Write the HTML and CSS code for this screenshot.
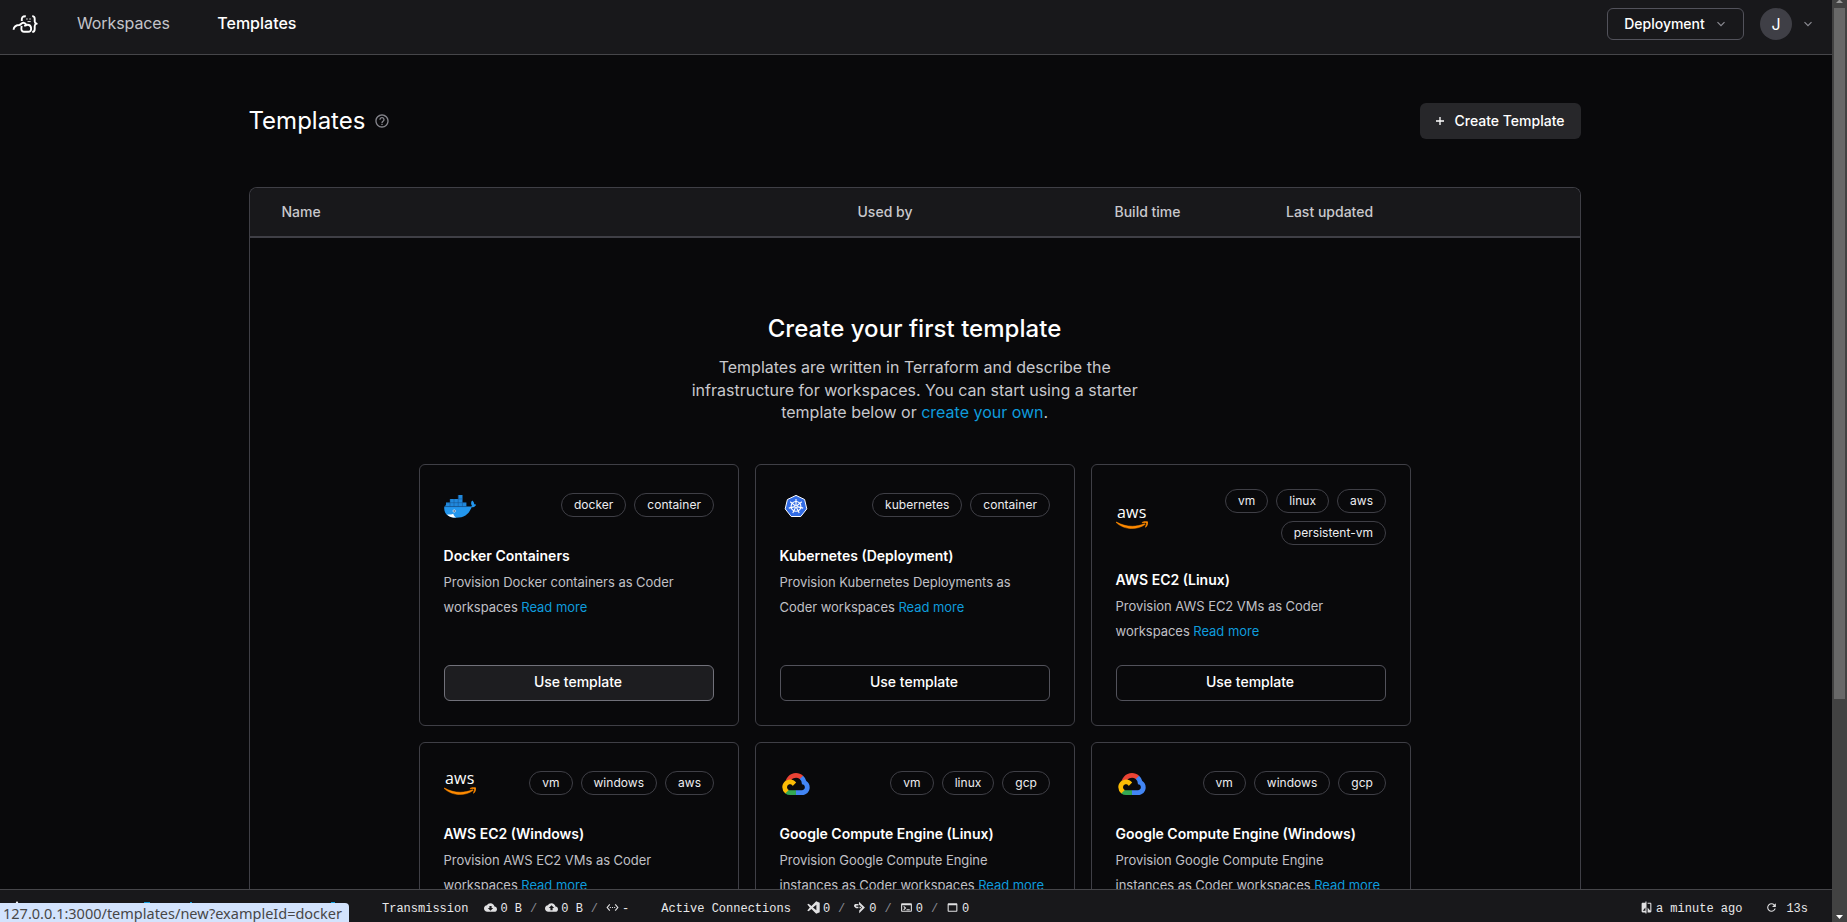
FILE: index.html
```html
<!DOCTYPE html>
<html lang="en">
<head>
<meta charset="utf-8">
<title>Templates</title>
<link rel="stylesheet" href="styles.css">
</head>
<body>
<svg class="defs" width="0" height="0" aria-hidden="true">
  <symbol id="smile" viewBox="0 0 256 60">
    <g transform="translate(0 -94)" fill="#ff8a00" stroke="#ff8a00" stroke-width="4">
      <path d="M230.993 120.964c-27.888 20.599-68.408 31.534-103.247 31.534-48.827 0-92.821-18.056-126.050-48.064-2.628-2.373-.255-5.594 2.881-3.730 35.942 20.854 80.276 33.483 126.136 33.483 30.940 0 64.932-6.442 96.212-19.666 4.662-2.120 8.646 3.052 4.068 6.443z"/>
      <path d="M242.614 107.742c-3.560-4.577-23.566-2.204-32.636-1.102-2.713.34-3.137-2.034-.678-3.814 15.936-11.190 42.130-7.968 45.181-4.239 3.052 3.815-.848 30.008-15.767 42.554-2.288 1.950-4.492.933-3.475-1.610 3.390-8.393 10.935-27.296 7.375-31.789z"/>
    </g>
  </symbol>
  <symbol id="gcp" viewBox="0 0 32 32">
    <g transform="translate(2.300 5) scale(.107)">
      <path fill="#EA4335" d="M170.252 56.819l22.253-22.253 1.483-9.370C153.437-11.677 88.976-7.496 52.420 33.920 42.267 45.423 34.734 59.764 30.717 74.573l7.970-1.123 44.505-7.340 3.436-3.513c19.797-21.742 53.270-24.667 76.128-6.168l7.496.39z"/>
      <path fill="#4285F4" d="M224.205 73.918a100.249 100.249 0 0 0-30.217-48.722l-31.232 31.232a55.515 55.515 0 0 1 20.379 44.037v5.544c15.350 0 27.797 12.445 27.797 27.796 0 15.352-12.446 27.485-27.797 27.485h-55.671l-5.466 5.934v33.340l5.466 5.231h55.670c39.930.311 72.553-31.494 72.864-71.424a72.303 72.303 0 0 0-31.793-60.453"/>
      <path fill="#34A853" d="M71.870 205.796h55.593V161.290H71.870a27.275 27.275 0 0 1-11.400-2.498l-7.887 2.420-22.409 22.253-1.952 7.574a72.260 72.260 0 0 0 43.648 14.757"/>
      <path fill="#FBBC05" d="M71.870 61.425C31.940 61.663-.237 94.228.001 134.159a72.302 72.302 0 0 0 28.222 56.880l32.248-32.247c-13.990-6.322-20.208-22.786-13.887-36.776 6.320-13.990 22.786-20.208 36.775-13.888a27.796 27.796 0 0 1 13.887 13.888l32.248-32.248A72.224 72.224 0 0 0 71.870 61.425"/>
    </g>
  </symbol>
</svg>

<header class="navbar">
  <svg class="logo" viewBox="0 0 26 20" fill="none" stroke="#fff" stroke-width="1.900" stroke-linejoin="round">
    <path d="M1.600 15.800C1.700 12.300 4.500 11.200 7.200 11c1.600-.2 2-2 4-2.300 1.500-.1 2.400.8 3.600 2.300l-2.600.9"/>
    <path d="M9.600 11.800c-.6 4.200 0 6 2.300 6h4.200c2.200 0 3.200-1.300 3-3.600-.2-2.300-1.600-3.600-4-3.500"/>
    <path d="M9.800 7C9.500 3.500 10.200 2.100 13.800 2.200M20.200 2.100c2 0 2.500.8 2.500 2.700v2.700c0 1.100.6 1.800 2 2.200-1.400.4-2 1.100-2 2.200v3.300c0 1.900-.5 2.700-2.500 2.700"/>
    <path d="M14.200 5h1.500M17.300 5h1.500M15.500 7.600h3.200" stroke-width=".9"/>
  </svg>
  <nav class="nav-links">
    <a>Workspaces</a>
    <a class="active">Templates</a>
  </nav>
  <button class="deployment">Deployment
    <svg viewBox="0 0 10 8"><path d="M1.500 2.200 5 5.700l3.500-3.500"/></svg>
  </button>
  <div class="avatar">J</div>
  <svg class="chevron" viewBox="0 0 10 8"><path d="M1.500 2.200 5 5.700l3.500-3.500"/></svg>
</header>

<main class="page">
  <div class="page-head">
    <h1>Templates</h1>
    <svg class="help" viewBox="0 0 24 24"><path d="M11 18h2v-2h-2v2zm1-16C6.480 2 2 6.480 2 12s4.480 10 10 10 10-4.480 10-10S17.520 2 12 2zm0 18c-4.410 0-8-3.590-8-8s3.590-8 8-8 8 3.590 8 8-3.590 8-8 8zm0-14c-2.210 0-4 1.790-4 4h2c0-1.100.9-2 2-2s2 .9 2 2c0 2-3 1.750-3 5h2c0-2.250 3-2.500 3-5 0-2.210-1.790-4-4-4z"/></svg>
    <button class="create"><svg viewBox="0 0 10 10"><path d="M5 1v8M1 5h8"/></svg>Create Template</button>
  </div>

  <section class="table">
    <div class="thead">
      <span>Name</span><span>Used by</span><span>Build time</span><span>Last updated</span>
    </div>
    <div class="empty">
      <h2>Create your first template</h2>
      <p class="intro">Templates are written in Terraform and describe the<br>infrastructure for workspaces. You can start using a starter<br>template below or <a>create your own</a>.</p>
      <div class="cards">
        <article class="card">
          <div class="card-top">
            <svg class="icon" viewBox="0 0 32 32">
              <path fill="#2396ed" d="M.3 16.400h25.200c1.300 0 2-.3 2.500-.7-1.300-1.700-1.200-3.700.1-5.300 1.500 1 2.100 2.200 2.100 3.600.6 0 1.200 0 1.900.5-.8 1.800-2.400 2.600-4.500 2.500C24.900 24.400 19.800 27.500 12.500 27.500 5 27.500-.6 24 .3 16.400z" transform="translate(0 .2)"/>
              <path fill="#2088dc" d="M2 12.500h4V8.900h8.300V5h4.200v7.500h3.900v4.100H.9l1.100-2z"/>
              <path stroke="#17508c" stroke-width=".5" fill="none" d="M2 12.700h20M6 9v7.700M10 9v7.700M14.200 5v11.700M18.400 12v4.700M14.200 8.900h4.300M.7 16.600h22"/>
              <circle cx="10.200" cy="21" r="1.200" fill="#173f73" stroke="#fff" stroke-width=".7"/>
              <path fill="#fff" d="M3 24.400c2 .3 4.500.1 6.300-.7.3 1.600 1 2.700 2.900 3.900C8.500 27.700 5.300 26.700 3 24.400z"/>
            </svg>
            <div class="tags"><span>docker</span><span>container</span></div>
          </div>
          <h3>Docker Containers</h3>
          <p>Provision Docker containers as Coder<br>workspaces <a>Read more</a></p>
          <button class="use hover">Use template</button>
        </article>
        <article class="card">
          <div class="card-top">
            <svg class="icon" viewBox="0 0 32 32">
              <path fill="#326ce5" stroke="#fff" stroke-width="1" stroke-linejoin="round" d="M16 5.400 24.600 9.500 26.800 18.900 20.800 26.500H11.200L5.200 18.900 7.400 9.500z"/>
              <g stroke="#fff" stroke-width="1.100" fill="none">
                <circle cx="16" cy="16.400" r="4.900"/>
                <path d="M16 16.400V9M16 16.400l5.800-4.600M16 16.400l7.200 1.700M16 16.400l3.200 6.700M16 16.400l-3.200 6.700M16 16.400l-7.200 1.700M16 16.400l-5.800-4.600"/>
              </g>
              <circle cx="16" cy="16.400" r="1.100" fill="#326ce5" stroke="#fff" stroke-width=".8"/>
            </svg>
            <div class="tags"><span>kubernetes</span><span>container</span></div>
          </div>
          <h3>Kubernetes (Deployment)</h3>
          <p>Provision Kubernetes Deployments as<br>Coder workspaces <a>Read more</a></p>
          <button class="use">Use template</button>
        </article>
        <article class="card">
          <div class="card-top">
            <div class="icon aws"><b>aws</b><svg><use href="#smile"/></svg></div>
            <div class="tags wrap"><span>vm</span><span>linux</span><span>aws</span><span>persistent-vm</span></div>
          </div>
          <h3>AWS EC2 (Linux)</h3>
          <p>Provision AWS EC2 VMs as Coder<br>workspaces <a>Read more</a></p>
          <button class="use">Use template</button>
        </article>
        <article class="card">
          <div class="card-top">
            <div class="icon aws"><b>aws</b><svg><use href="#smile"/></svg></div>
            <div class="tags"><span>vm</span><span>windows</span><span>aws</span></div>
          </div>
          <h3>AWS EC2 (Windows)</h3>
          <p>Provision AWS EC2 VMs as Coder<br>workspaces <a>Read more</a></p>
        </article>
        <article class="card">
          <div class="card-top">
            <svg class="icon"><use href="#gcp"/></svg>
            <div class="tags"><span>vm</span><span>linux</span><span>gcp</span></div>
          </div>
          <h3>Google Compute Engine (Linux)</h3>
          <p>Provision Google Compute Engine<br>instances as Coder workspaces <a>Read more</a></p>
        </article>
        <article class="card">
          <div class="card-top">
            <svg class="icon"><use href="#gcp"/></svg>
            <div class="tags"><span>vm</span><span>windows</span><span>gcp</span></div>
          </div>
          <h3>Google Compute Engine (Windows)</h3>
          <p>Provision Google Compute Engine<br>instances as Coder workspaces <a>Read more</a></p>
        </article>
      </div>
    </div>
  </section>
</main>

<footer class="statusbar">
  <div class="group transmission">
    <span class="label">Transmission</span>
    <svg viewBox="0 0 24 24"><path d="M19.350 10.040C18.670 6.590 15.640 4 12 4 9.110 4 6.600 5.640 5.350 8.040 2.340 8.360 0 10.910 0 14c0 3.310 2.690 6 6 6h13c2.760 0 5-2.240 5-5 0-2.640-2.050-4.780-4.650-4.960zM17 13l-5 5-5-5h3V9h4v4h3z"/></svg>
    <span>0 B</span><i>/</i>
    <svg viewBox="0 0 24 24"><path d="M19.350 10.040C18.670 6.590 15.640 4 12 4 9.110 4 6.600 5.640 5.350 8.040 2.340 8.360 0 10.910 0 14c0 3.310 2.690 6 6 6h13c2.760 0 5-2.240 5-5 0-2.640-2.050-4.780-4.650-4.960zM14 13v4h-4v-4H7l5-5 5 5h-3z"/></svg>
    <span>0 B</span><i>/</i>
    <svg viewBox="0 0 24 24"><path d="M7.770 6.760L6.230 5.480.82 12l5.410 6.520 1.540-1.280L3.420 12l4.350-5.240zM7 13h2v-2H7v2zm10-2h-2v2h2v-2zm-6 2h2v-2h-2v2zm6.770-7.520l-1.540 1.280L20.580 12l-4.350 5.240 1.540 1.280L23.180 12l-5.410-6.520z"/></svg>
    <span>-</span>
  </div>
  <div class="group connections">
    <span class="label">Active Connections</span>
    <svg viewBox="0 0 24 24"><path fill-rule="evenodd" d="M17 .5l6.500 2.800v17.400L17 23.500 8.200 14.800 3 18.800.500 17.400 5.300 12 .5 6.600 3 5.200l5.200 4zM17.300 7 11 12l6.300 5z"/></svg>
    <span>0</span><i>/</i>
    <svg viewBox="0 0 24 24"><path d="M11 1.500 22 12 11.500 22.500V17.500l5.500-5.300L11 6.500zM4 5.500h6v3H6v2h4v3H5.500L2 10V7.500zM12 10.500h3v3h-3z"/></svg>
    <span>0</span><i>/</i>
    <svg viewBox="0 0 24 24"><path d="M20 4H4c-1.110 0-2 .9-2 2v12c0 1.100.89 2 2 2h16c1.100 0 2-.9 2-2V6c0-1.100-.89-2-2-2zm0 14H4V8h16v10zm-2-1h-6v-2h6v2zM7.500 17l-1.410-1.410L8.670 13l-2.590-2.590L7.500 9l4 4-4 4z"/></svg>
    <span>0</span><i>/</i>
    <svg viewBox="0 0 24 24"><path d="M19 4H5c-1.110 0-2 .9-2 2v12c0 1.100.89 2 2 2h14c1.100 0 2-.9 2-2V6c0-1.100-.89-2-2-2zm0 14H5V8h14v10z"/></svg>
    <span>0</span>
  </div>
  <div class="group refresh">
    <svg viewBox="0 0 24 24"><path d="M10 3H5c-1.100 0-2 .9-2 2v14c0 1.100.9 2 2 2h5v2h2V1h-2v2zm0 15H5l5-6v6zm9-15h-5v2h5v13l-5-6v9h5c1.100 0 2-.9 2-2V5c0-1.100-.9-2-2-2z"/></svg>
    <span>a minute ago</span>
    <svg class="reload" viewBox="0 0 24 24"><path d="M17.650 6.350A7.958 7.958 0 0012 4c-4.420 0-7.990 3.580-7.990 8s3.570 8 7.990 8c3.730 0 6.840-2.550 7.730-6h-2.080A5.990 5.990 0 0112 18c-3.310 0-6-2.690-6-6s2.690-6 6-6c1.660 0 3.140.69 4.220 1.780L13 11h7V4l-2.350 2.350z"/></svg>
    <span>13s</span>
  </div>
  <svg class="version-tips" viewBox="0 0 349 4"><path fill="#fff" d="M15 4l2-3 2 3z"/><path fill="#0f9bdc" d="M144 2h6v2h-6zM190 2h2v2h-2zM331 2h4v2h-4z"/></svg>
</footer>

<div class="scrollbar">
  <svg viewBox="0 0 15 8"><path fill="#9a9a9a" d="M4 3h7L7.500-.5z"/></svg>
  <div class="thumb"></div>
  <svg class="down" viewBox="0 0 15 8"><path fill="#fff" d="M4 1h7L7.500 5z"/></svg>
</div>
<div class="link-status">127.0.0.1:3000/templates/new?exampleId=docker</div>
</body>
</html>
```
FILE: styles.css
```css
* { box-sizing: border-box; }
html, body { margin: 0; height: 922px; overflow: hidden; }
body {
  background: #09090b;
  color: #fff;
  font-family: Inter, sans-serif;
  font-size: 14px;
}
h1, h2, h3, p { margin: 0; }
button { font: inherit; color: #fff; display: flex; align-items: center; justify-content: center; padding: 0; }
.defs { position: absolute; }

.navbar {
  width: 1832px;
  height: 55px;
  padding: 8px 19px 0 12px;
  display: flex;
  align-items: flex-start;
  background: #18181b;
  border-bottom: 1px solid #46464a;
}
.logo { width: 26px; height: 20px; margin-top: 6px; }
.nav-links { display: flex; gap: 48px; margin-left: 39px; font-size: 16px; line-height: 31px; letter-spacing: -.1px; color: #c4c4c9; flex: 1; }
.nav-links .active { color: #fff; font-weight: 500; letter-spacing: 0; margin-left: -.6px; }
.deployment {
  width: 137px; height: 32px;
  gap: 12px; padding-bottom: 1px;
  border: 1px solid #52525b; border-radius: 6px;
  background: transparent;
  font-weight: 500;
}
.deployment svg, .chevron { width: 10px; height: 8px; fill: none; stroke: #8b8b93; stroke-width: 1.2; }
.deployment svg { margin: 1px 1px 0 -1px; }
.avatar {
  width: 32px; height: 32px; margin: 0 11px 0 16px;
  border-radius: 50%;
  background: #3f3f46;
  text-align: center; line-height: 32px; font-size: 16px;
}
.chevron { margin-top: 12px; }

.page { width: 1332px; height: 834px; margin-left: 249px; padding-top: 48px; overflow: hidden; }
.page-head { display: flex; align-items: center; height: 36px; }
.page-head h1 { font-size: 24px; font-weight: 400; line-height: 36px; margin-left: -.5px; }
.help { width: 16px; height: 16px; margin-left: 9px; fill: #85858c; }
.create {
  width: 161px; height: 36px; margin-left: auto;
  gap: 10px; padding: 0 2px 1px 0;
  background: #27272a; border: 0; border-radius: 6px;
  font-weight: 500;
}
.create svg { width: 10px; height: 10px; margin-top: 1px; fill: none; stroke: #fff; stroke-width: 1.3; }

.table { margin-top: 48px; border: 1px solid #3f3f46; border-bottom: 0; border-radius: 8px 8px 0 0; height: 702px; }
.thead {
  display: grid;
  grid-template-columns: 576px 257px 171.500px 1fr;
  height: 50px; padding-left: 31.500px;
  line-height: 47px;
  border-bottom: 2px solid #3f3f46;
  background: #18181b;
  border-radius: 7px 7px 0 0;
  font-weight: 500; color: #c8c8cd;
}
.empty { padding-top: 76px; display: flex; flex-direction: column; align-items: center; }
.empty h2 { font-size: 24px; font-weight: 500; line-height: 29px; letter-spacing: .04px; margin-left: -1px; }
.empty a { color: #0f9bdc; }
.intro { margin-top: 13.400px; margin-left: -.6px; text-align: center; font-size: 16px; line-height: 22.400px; color: #c8c8cd; }
.cards {
  display: grid;
  grid-template-columns: repeat(3, 320px);
  gap: 16px;
  margin-top: 40.400px;
}
.card {
  display: flex; flex-direction: column;
  height: 262px; padding: 24px;
  border: 1px solid #3f3f46; border-radius: 6px;
}
.card-top { display: flex; align-items: center; justify-content: space-between; min-height: 32px; }
.icon { width: 32px; height: 32px; flex: none; margin: 1px 0 -1px; }
.aws { display: flex; flex-direction: column; padding-top: 3px; }
.aws b { height: 16px; padding-left: 1px; font: 500 16px/15px "Open Sans", sans-serif; letter-spacing: .2px; white-space: nowrap; }
.aws svg { width: 32px; height: 8px; }
.tags { display: flex; justify-content: flex-end; gap: 8px; }
.tags.wrap { flex-wrap: wrap; max-width: 170px; }
.tags span {
  height: 24px; padding: 0 12px;
  border: 1px solid #3f3f46; border-radius: 12px;
  font-size: 12px; line-height: 22px; letter-spacing: .03px; color: #ededf0;
}
.card h3 { margin-top: 24px; margin-left: -.4px; font-size: 14px; font-weight: 600; line-height: 22px; }
.card p { font-size: 13px; line-height: 25px; letter-spacing: -.045px; color: #c0c0c6; margin-top: 2.500px; margin-left: -.4px; white-space: nowrap; }
.use {
  height: 36px; margin-top: auto; flex: none;
  border: 1px solid #52525b; border-radius: 6px;
  background: transparent;
  font-weight: 500; padding: 0 2px 3px 0;
}
.use.hover { background: #1d1d20; border-color: #71717a; }

.statusbar {
  position: absolute; left: 0; top: 889px;
  width: 1832px; height: 33px;
  display: flex; align-items: center;
  padding: 6px 24px 0 382px;
  background: #18181b; border-top: 1px solid #46464a;
  font: 12px "Liberation Mono", monospace; color: #e8e8ea;
}
.group { display: flex; align-items: center; }
.group svg { width: 13px; height: 13px; fill: #e0e0e2; margin: 0 3px 4px 0; }
.group i { font-style: normal; color: #8b8b93; margin: 0 8px; }
.group .label { margin-right: 16px; }
.connections { margin-left: 32px; }
.refresh { margin-left: auto; }
.refresh .reload { margin: 0 8px 4px 23px; }
.version-tips { position: absolute; left: 0; top: 10px; width: 349px; height: 4px; }

.scrollbar {
  position: absolute; left: 1832px; top: 0;
  width: 15px; height: 922px;
  background: #424242;
  display: flex; flex-direction: column;
}
.scrollbar svg { width: 15px; height: 8px; flex: none; }
.scrollbar .thumb { width: 11px; height: 691px; margin-left: 2px; background: #686868; }
.scrollbar .down { margin-top: auto; }

.link-status {
  position: absolute; left: 0; top: 903px;
  width: 349px; height: 19px;
  padding-left: 3px;
  background: #d3e3fd; color: #474747;
  border-radius: 0 4px 0 0;
  font: 14.500px/20px "Noto Sans", sans-serif;
  white-space: nowrap; overflow: hidden;
}
```
